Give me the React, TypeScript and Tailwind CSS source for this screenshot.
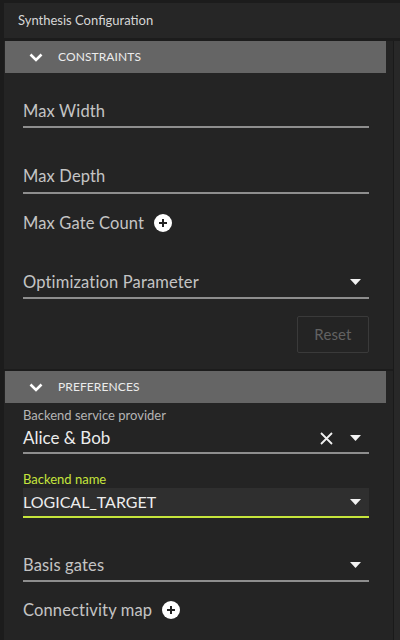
import React from "react";

const Chevron = () => (
  <svg width="14" height="9" viewBox="0 0 14 9" className="shrink-0">
    <path d="M1.5 1.5 L7 7 L12.5 1.5" fill="none" stroke="#ffffff" strokeWidth="2.6" />
  </svg>
);

const Tri = () => (
  <svg width="11" height="6" viewBox="0 0 11 6" className="shrink-0">
    <path d="M0 0 L11 0 L5.5 6 Z" fill="#f2f2f2" />
  </svg>
);

const XIcon = () => (
  <svg width="13" height="13" viewBox="0 0 13 13" className="shrink-0">
    <path d="M1 1 L12 12 M12 1 L1 12" stroke="#f0f0f0" strokeWidth="1.8" fill="none" />
  </svg>
);

const PlusCircle = () => (
  <svg width="18" height="18" viewBox="0 0 18 18" className="shrink-0">
    <circle cx="9" cy="9" r="9" fill="#ffffff" />
    <path d="M9 5 V13 M5 9 H13" stroke="#222222" strokeWidth="2" />
  </svg>
);

const Header = ({ title }: { title: string }) => (
  <div className="ml-[1px] w-[381px] h-[32px] bg-[#656565] flex items-center pl-[24px] gap-[15px]">
    <Chevron />
    <span className="text-[12px] text-[#ececec] tracking-[0.1px]">{title}</span>
  </div>
);

export default function App() {
  return (
    <div
      className="w-[400px] h-[640px] bg-[#1c1c1c] pt-[3px] pl-[4px] flex flex-col overflow-hidden"
      style={{ fontFamily: "Lato, 'Noto Sans', sans-serif" }}
    >
      <div className="h-[35px] shrink-0 bg-[#262626] flex items-center pl-[14px] text-[13px] text-[#d6d6d6]">
        Synthesis Configuration
      </div>
      <div className="h-[3px] shrink-0 bg-[#1c1c1c]" />
      <div className="flex-1 flex">
        <div className="w-[389px] bg-[#242424] flex flex-col">
          <Header title="CONSTRAINTS" />
          <div className="px-[19px] w-[384px] flex flex-col text-[16.5px] tracking-[0.15px] text-[#c4c4c4]">
            <div className="mt-[28px] leading-[20px] pb-[5px] border-b-2 border-[#8e8e8e]">Max Width</div>
            <div className="mt-[38px] leading-[20px] pb-[6px] border-b-2 border-[#8e8e8e]">Max Depth</div>
            <div className="mt-[19px] leading-[20px] flex items-center gap-[10px]">
              <span>Max Gate Count</span>
              <PlusCircle />
            </div>
            <div className="mt-[39px] leading-[20px] pb-[5px] border-b-2 border-[#8e8e8e] flex items-center justify-between pr-[8px]">
              <span>Optimization Parameter</span>
              <Tri />
            </div>
            <div className="mt-[17px] flex justify-end">
              <div className="w-[72px] h-[37px] border border-[#3a3a3a] rounded-[2px] flex items-center justify-center text-[15px] text-[#626262]">
                Reset
              </div>
            </div>
          </div>
          <div className="mt-[16px] h-[2px] bg-[#1c1c1c]" />
          <Header title="PREFERENCES" />
          <div className="px-[19px] w-[384px] flex flex-col">
            <div className="mt-[4px] leading-[16px] text-[13px] text-[#b4b4b4]">Backend service provider</div>
            <div className="mt-[5px] leading-[20px] pb-[4px] border-b-2 border-[#8e8e8e] flex items-center text-[17px] text-[#ececec] pr-[8px]">
              <span className="flex-1">Alice &amp; Bob</span>
              <XIcon />
              <span className="w-[17px]" />
              <Tri />
            </div>
            <div className="mt-[17px] leading-[16px] text-[13px] text-[#c6e53c]">Backend name</div>
            <div className="mt-[1px] h-[30px] bg-[#2f2f2f] border-b-2 border-[#c6e53c] flex items-center justify-between pr-[8px] text-[16px] text-[#ececec]">
              <span>LOGICAL_TARGET</span>
              <Tri />
            </div>
            <div className="mt-[37px] leading-[20px] pb-[5px] border-b-2 border-[#8e8e8e] flex items-center justify-between pr-[8px] text-[16.5px] tracking-[0.15px] text-[#c4c4c4]">
              <span>Basis gates</span>
              <Tri />
            </div>
            <div className="mt-[18px] leading-[20px] flex items-center gap-[10px] text-[16.5px] tracking-[0.15px] text-[#c4c4c4]">
              <span>Connectivity map</span>
              <PlusCircle />
            </div>
          </div>
        </div>
        <div className="w-[1px] bg-[#1a1a1a]" />
        <div className="flex-1 bg-[#282828]" />
      </div>
    </div>
  );
}
